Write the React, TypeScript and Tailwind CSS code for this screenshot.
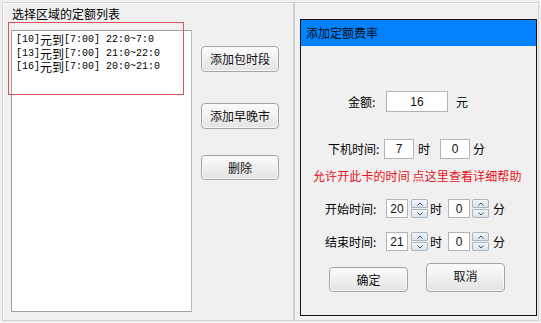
import React from "react";

const items = [
  ["[10]", "元到", "[7:00] 22:0~7:0"],
  ["[13]", "元到", "[7:00] 21:0~22:0"],
  ["[16]", "元到", "[7:00] 20:0~21:0"],
];

function WinButton({ label, className }: { label: string; className: string }) {
  return (
    <div
      className={`flex items-center justify-center rounded-[4px] border border-[#a5a5a5] bg-gradient-to-b from-[#fcfcfc] to-[#e3e3e3] text-[12px] leading-[14px] text-[#111] shadow-[inset_0_0_0_1px_#f8f8f8] ${className}`}
    >
      {label}
    </div>
  );
}

function Spin() {
  return (
    <div className="flex h-[19px] w-[17px] flex-col justify-between">
      <div className="flex h-[9px] items-center justify-center rounded-t-[2px] border border-[#a8b5c3] bg-gradient-to-b from-[#f3f6f9] to-[#d9e2eb]">
        <svg width="6" height="4" viewBox="0 0 6 4">
          <polyline points="0.5,3.5 3,1 5.5,3.5" fill="none" stroke="#3f5068" strokeWidth="1" />
        </svg>
      </div>
      <div className="flex h-[9px] items-center justify-center rounded-b-[2px] border border-[#a8b5c3] bg-gradient-to-b from-[#f3f6f9] to-[#d9e2eb]">
        <svg width="6" height="4" viewBox="0 0 6 4">
          <polyline points="0.5,0.5 3,3 5.5,0.5" fill="none" stroke="#3f5068" strokeWidth="1" />
        </svg>
      </div>
    </div>
  );
}

function Box({ value, className }: { value: string; className: string }) {
  return (
    <div
      className={`flex items-center justify-center border border-[#b4b4b4] bg-white font-['Liberation_Sans',sans-serif] text-[12px] text-[#111] ${className}`}
    >
      {value}
    </div>
  );
}

export default function App() {
  return (
    <div className="relative h-[323px] w-[541px] bg-[#f0f0f0] p-[2px] font-['Noto_Sans_CJK_SC',sans-serif] text-black">
      <div className="flex h-[319px] w-[537px] border border-[#d2d2d2] shadow-[inset_1px_1px_0_#fff]">
        {/* left: list of rates */}
        <div className="flex h-full w-[292px] flex-col border-r-2 border-double border-[#d0d0d0]">
          <div className="pl-[9px] pt-[4px] text-[12px] leading-[14px]">选择区域的定额列表</div>
          <div className="mt-[9px] flex">
            <div className="ml-[8px] h-[282px] w-[181px] border border-[#a0a0a0] border-r-[#b8b8b8] bg-white pl-[4px] pt-[2px]">
              {items.map(([a, b, c]) => (
                <div key={a} className="flex h-[13.5px] items-center whitespace-pre leading-[13px]">
                  <span className="font-['Liberation_Mono',monospace] text-[10px] leading-[13px]">{a}</span>
                  <span className="text-[12px] leading-[13px]">{b}</span>
                  <span className="font-['Liberation_Mono',monospace] text-[10px] leading-[13px]">{c}</span>
                </div>
              ))}
            </div>
            <div className="ml-[9px] flex w-[78px] flex-col">
              <WinButton label="添加包时段" className="mt-[16px] h-[26px]" />
              <WinButton label="添加早晚市" className="mt-[31px] h-[26px]" />
              <WinButton label="删除" className="mt-[26px] h-[25px]" />
            </div>
          </div>
        </div>

        {/* right: add rate dialog */}
        <div className="ml-[5px] mt-[16px] flex h-[297px] w-[237px] flex-col border border-[#111] text-[12px]">
          <div className="flex h-[26px] items-center bg-[#0382ff] pl-[5px] text-[12px] text-[#0a0a0a]">添加定额费率</div>

          <div className="mt-[45px] flex h-[21px] items-center pl-[47px]">
            <span className="w-[38px]">金额:</span>
            <Box value="16" className="h-[21px] w-[62px]" />
            <span className="ml-[8px]">元</span>
          </div>

          <div className="mt-[27px] flex h-[20px] items-center pl-[27px]">
            <span className="w-[56px] whitespace-nowrap">下机时间:</span>
            <Box value="7" className="h-[20px] w-[30px]" />
            <span className="ml-[4px]">时</span>
            <Box value="0" className="ml-[10px] h-[20px] w-[30px]" />
            <span className="ml-[3px]">分</span>
          </div>

          <div className="mt-[9px] h-[16px] whitespace-nowrap pl-[12px] text-[12px] leading-[16px] tracking-[0.1px] text-[#e8111b]">
            允许开此卡的时间 点这里查看详细帮助
          </div>

          {[
            ["开始时间:", "20"],
            ["结束时间:", "21"],
          ].map(([label, h], i) => (
            <div key={label} className={`flex h-[19px] items-center pl-[24px] ${i === 0 ? "mt-[15px]" : "mt-[14px]"}`}>
              <span className="w-[61px] whitespace-nowrap">{label}</span>
              <Box value={h} className="h-[19px] w-[22px]" />
              <div className="ml-[3px]">
                <Spin />
              </div>
              <span className="ml-[2px]">时</span>
              <Box value="0" className="ml-[6px] h-[19px] w-[22px]" />
              <div className="ml-[2px]">
                <Spin />
              </div>
              <span className="ml-[4px]">分</span>
            </div>
          ))}

          <div className="mt-[12px] flex items-start pl-[28px]">
            <WinButton label="确定" className="mt-[4px] h-[25px] w-[79px]" />
            <WinButton label="取消" className="ml-[18px] h-[29px] w-[79px] pb-[3px]" />
          </div>
        </div>
      </div>

      {/* annotation rectangle over the list */}
      <div className="pointer-events-none absolute left-[8px] top-[22px] h-[73px] w-[176px] border border-[#e0505a]" />
    </div>
  );
}
